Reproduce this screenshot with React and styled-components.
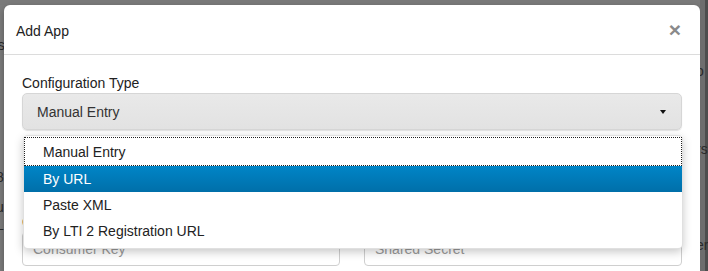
import styled, { createGlobalStyle } from "styled-components"

const GlobalStyle = createGlobalStyle`
    html, body {
        margin: 0;
        padding: 0;
        width: 708px;
        height: 271px;
        overflow: hidden;
        background: #777;
    }
    * {
        box-sizing: border-box;
    }
`

const options = ["Manual Entry", "By URL", "Paste XML", "By LTI 2 Registration URL"]

export default function App() {
    const selected = 1

    return (
        <Page>
            <GlobalStyle />
            <LeftStrip>
                <Ghost>ns</Ghost>
                <Ghost $top={116}>8</Ghost>
                <Ghost $top={14}>u</Ghost>
                <Ghost $top={2}>L</Ghost>
            </LeftStrip>
            <Modal>
                <Header>
                    <Title>Add App</Title>
                    <Close>×</Close>
                </Header>
                <Body>
                    <Label>Configuration Type</Label>
                    <SelectBox>
                        <span>Manual Entry</span>
                        <Caret />
                    </SelectBox>

                    <Row>
                        <Field>
                            <Label>Consumer Key</Label>
                            <Input placeholder="Consumer Key" />
                        </Field>
                        <Field>
                            <Label>Shared Secret</Label>
                            <Input placeholder="Shared Secret" />
                        </Field>
                    </Row>

                    <Menu>
                        {options.map((opt, i) => (
                            <Option key={opt} $active={i === selected} $focused={i === 0}>
                                {opt}
                            </Option>
                        ))}
                    </Menu>
                </Body>
            </Modal>
            <RightStrip>
                <Ghost $top={58}>o</Ghost>
                <Ghost $top={62}>rs</Ghost>
                <Ghost $top={80}>er</Ghost>
            </RightStrip>
        </Page>
    )
}

const Page = styled.div`
    display: grid;
    grid-template-columns: 4px 696px 1fr;
    padding-top: 5px;
    height: 271px;
    font-family: "Liberation Sans", Arial, sans-serif;
    font-size: 14px;
    color: #333;
    background: #7a7a7a;
    -webkit-font-smoothing: antialiased;
`

const LeftStrip = styled.div`
    display: flex;
    flex-direction: column;
    overflow: hidden;
    padding-top: 32px;
    background: #7c7c7c;
`

const RightStrip = styled.div`
    display: flex;
    flex-direction: column;
    overflow: hidden;
    margin-top: -5px;
    padding-top: 5px;
    background: linear-gradient(90deg, #6e6e6e 0 5px, #4e4e4e 5px);
`

const Ghost = styled.span`
    display: block;
    margin-top: ${p => p.$top || 0}px;
    font-size: 14px;
    line-height: 16px;
    color: #2a2a2a;
    white-space: nowrap;
    text-indent: ${p => (p.$top ? "-4px" : "-10px")};
`

const Modal = styled.div`
    background: #fff;
    border-radius: 6px 6px 0 0;
    box-shadow: 0 3px 7px rgba(0, 0, 0, 0.3);
    display: flex;
    flex-direction: column;
`

const Header = styled.div`
    display: flex;
    align-items: center;
    justify-content: space-between;
    height: 50px;
    padding: 0 19px 0 12px;
    border-bottom: 1px solid #dcdcdc;
`

const Title = styled.div`
    font-size: 14px;
    color: #222;
    margin-top: 2px;
`

const Close = styled.div`
    font-size: 21px;
    font-weight: bold;
    line-height: 20px;
    color: #8a8a8a;
`

const Body = styled.div`
    position: relative;
    padding: 18px 18px 0;
`

const Label = styled.div`
    line-height: 20px;
    color: #222;
`

const SelectBox = styled.div`
    display: flex;
    align-items: center;
    justify-content: space-between;
    height: 37px;
    padding: 0 15px 0 14px;
    border-radius: 5px;
    border: 1px solid #d6d6d6;
    background: linear-gradient(#e9e9e9, #e2e2e2);
    box-shadow: 0 1px 1px rgba(0, 0, 0, 0.12);
    color: #333;
`

const Caret = styled.span`
    width: 0;
    height: 0;
    border-left: 3.5px solid transparent;
    border-right: 3.5px solid transparent;
    border-top: 4px solid #111;
`

const Row = styled.div`
    display: grid;
    grid-template-columns: 1fr 1fr;
    gap: 24px;
    margin-top: 82px;
`

const Field = styled.div`
    display: flex;
    flex-direction: column;
`

const Input = styled.input`
    height: 34px;
    padding: 0 10px;
    border: 1px solid #cfcfcf;
    border-radius: 4px;
    font-family: inherit;
    font-size: 14px;
    background: #fff;

    &::placeholder {
        color: #999;
    }
`

const Menu = styled.div`
    position: absolute;
    left: 19px;
    top: 80px;
    width: 660px;
    padding: 1px 0 4px;
    background: #fff;
    border: 1px solid rgba(0, 0, 0, 0.12);
    border-radius: 5px;
    box-shadow: 0 3px 10px rgba(0, 0, 0, 0.22);
`

const Option = styled.div`
    height: ${p => (p.$focused ? 29 : 26)}px;
    display: flex;
    align-items: center;
    padding-left: 19px;
    color: ${p => (p.$active ? "#fff" : "#222")};
    background: ${p => (p.$active ? "linear-gradient(#0085c7, #006fa9)" : "transparent")};
    outline: ${p => (p.$focused ? "1px dotted #222" : "none")};
    outline-offset: -1px;
`
